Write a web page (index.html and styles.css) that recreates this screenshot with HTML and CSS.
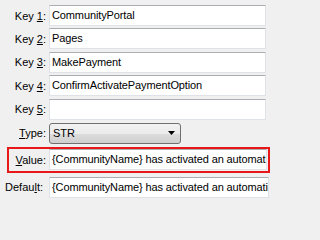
FILE: index.html
```html
<!DOCTYPE html>
<html>
<head>
<meta charset="utf-8">
<link rel="stylesheet" href="styles.css">
</head>
<body>
<div class="form">
  <div class="row key"><span class="label">Key <u>1</u>:</span><div class="field">CommunityPortal</div></div>
  <div class="row key"><span class="label">Key <u>2</u>:</span><div class="field">Pages</div></div>
  <div class="row key"><span class="label">Key <u>3</u>:</span><div class="field">MakePayment</div></div>
  <div class="row key"><span class="label">Key <u>4</u>:</span><div class="field">ConfirmActivatePaymentOption</div></div>
  <div class="row key"><span class="label">Key <u>5</u>:</span><div class="field"></div></div>
  <div class="row type"><span class="label"><u>T</u>ype:</span><div class="select"><span>STR</span><svg class="arrow" width="7" height="4" viewBox="0 0 7 4"><path d="M0 0H7L3.5 4Z" fill="#000"/></svg></div></div>
  <div class="highlight">
    <div class="row val"><span class="label"><u>V</u>alue:</span><div class="field">{CommunityName} has activated an automatic payment option</div></div>
  </div>
  <div class="row def"><span class="label">Defau<u>l</u>t:</span><div class="field">{CommunityName} has activated an automatic payment option</div></div>
</div>
</body>
</html>
```
FILE: styles.css
```css
html, body {
  margin: 0;
  padding: 0;
  background: #f0f0f0;
  width: 271px;
  height: 201px;
  overflow: hidden;
}
.form {
  font-family: "Liberation Sans", Arial, sans-serif;
  font-size: 11px;
  color: #000;
  padding-top: 5px;
  display: flex;
  flex-direction: column;
}
.row {
  display: flex;
  align-items: center;
  height: 21px;
}
.label {
  width: 46px;
  text-align: right;
  padding-right: 3px;
  box-sizing: border-box;
  white-space: nowrap;
}
.field {
  box-sizing: border-box;
  height: 21px;
  background: #fff;
  border: 1px solid #dfe3e8;
  border-top-color: #abadb3;
  padding: 0 2px;
  line-height: 19px;
  white-space: nowrap;
  overflow: hidden;
  letter-spacing: -0.12px;
}
.key { margin-bottom: 2.4px; }
.key .label { width: 49px; }
.key .field { width: 217px; }
.type { margin-top: 0.6px; }
.type .label { width: 49px; }
.select {
  box-sizing: border-box;
  width: 132px;
  height: 21px;
  border: 1px solid #707070;
  border-radius: 3px;
  background: linear-gradient(#f2f2f2 0%, #ebebeb 50%, #dddddd 51%, #cfcfcf 100%);
  display: flex;
  align-items: center;
  justify-content: space-between;
  padding: 0 5px 0 3px;
}
.arrow { display: block; }
.highlight {
  margin: 3px 1px 0 7px;
  height: 26px;
  box-sizing: border-box;
  border: 2px solid #e81818;
  display: flex;
  align-items: center;
}
.val .label { width: 40px; }
.val .field { width: 218px; }
.def { margin-top: 4px; }
.def .label { width: 49px; padding-right: 6px; }
.def .field { width: 220px; }
```
